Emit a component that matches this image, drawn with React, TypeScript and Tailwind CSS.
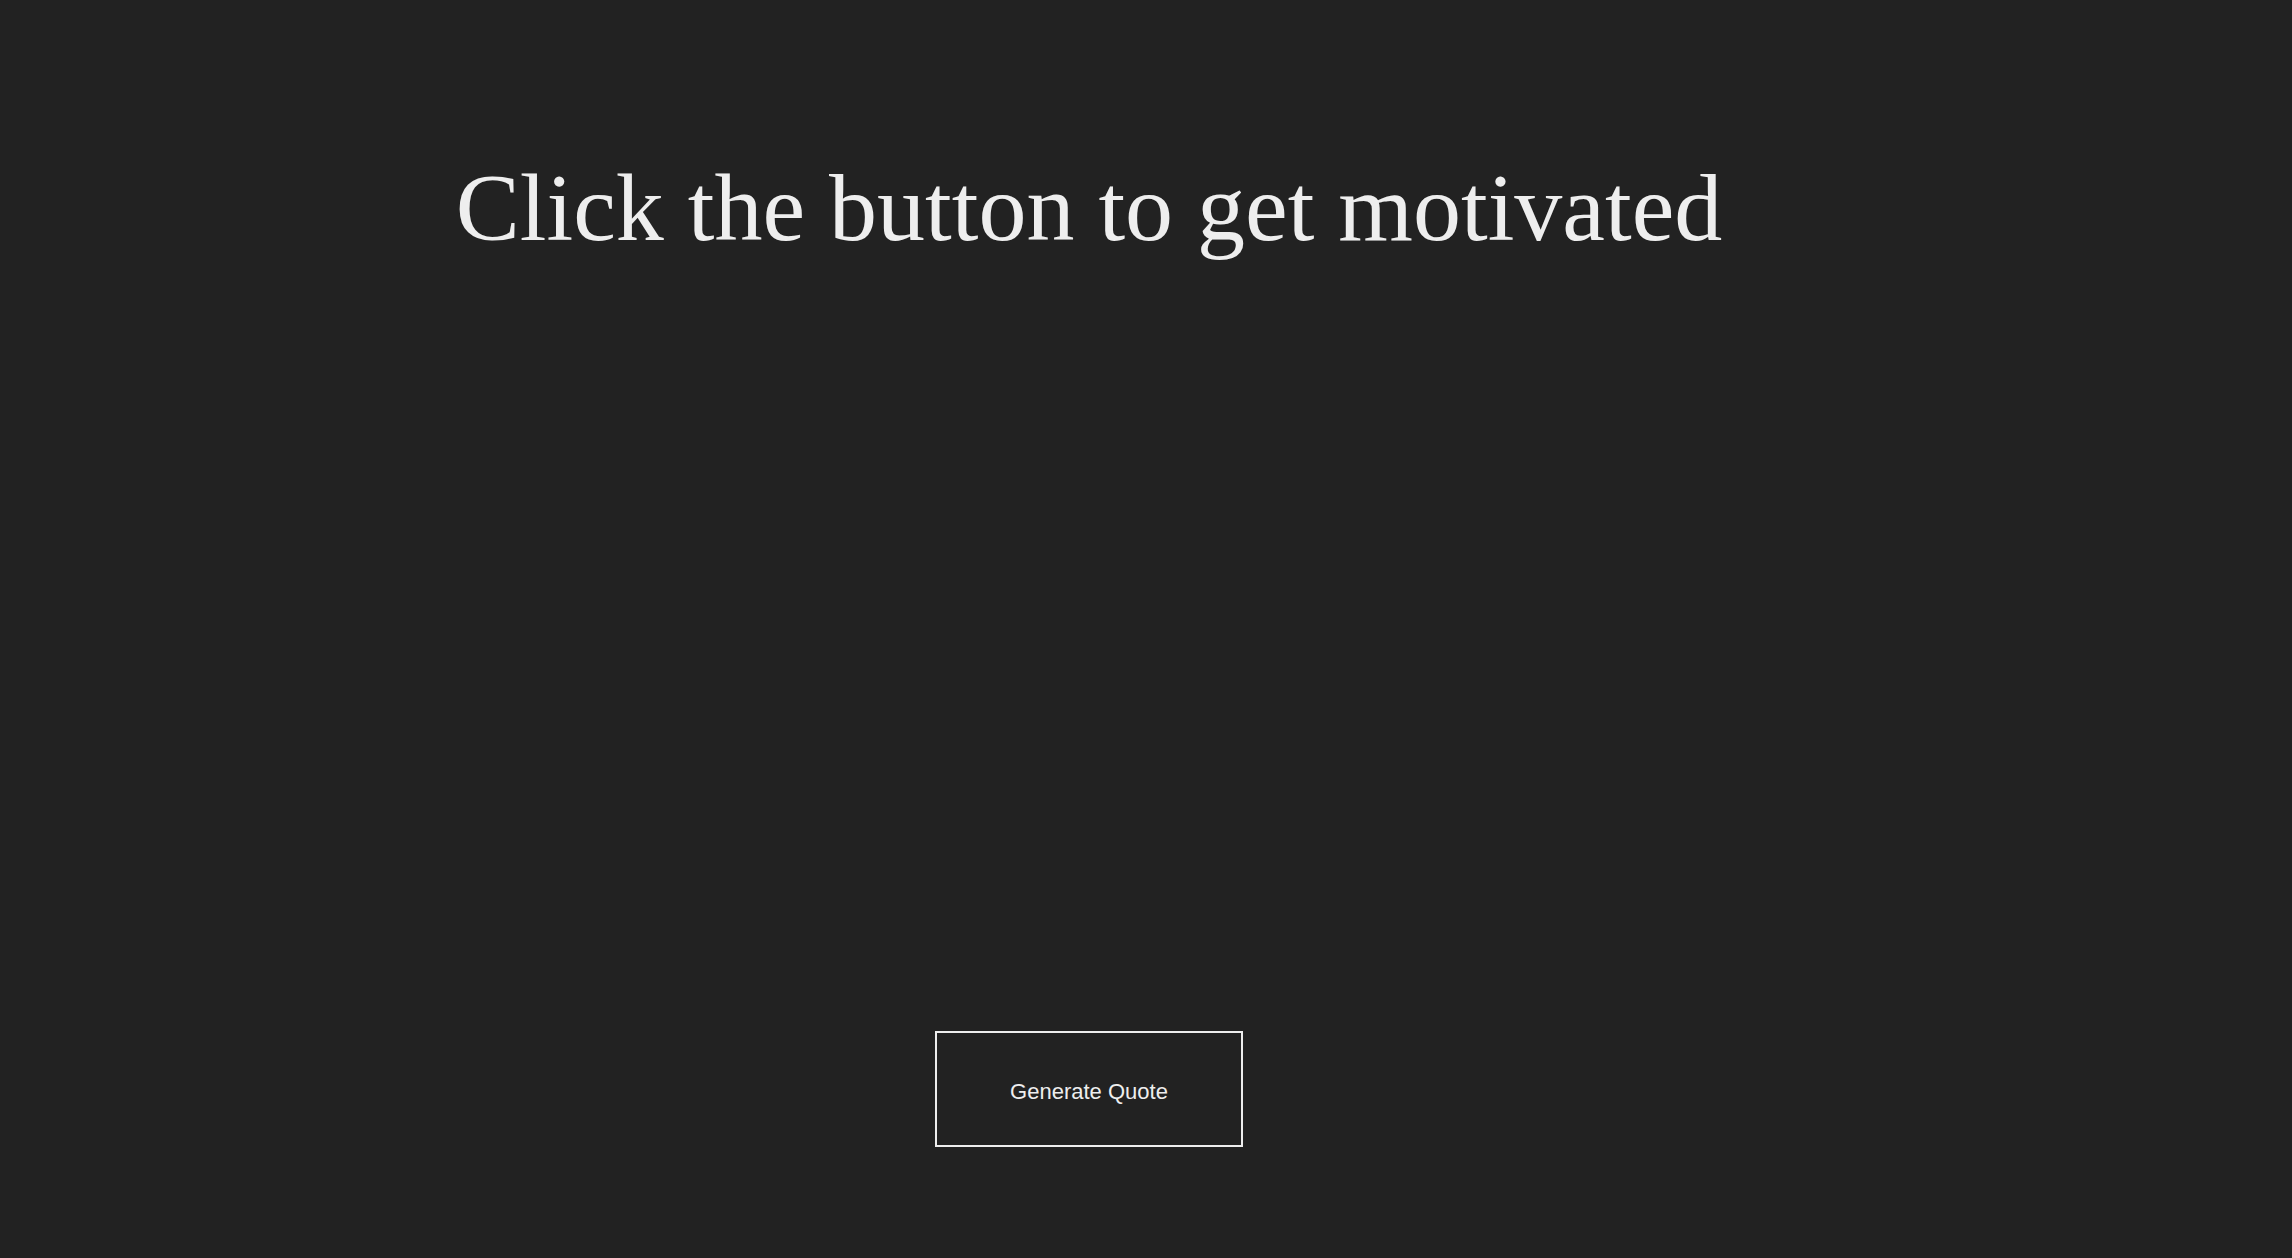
import React, { useState } from 'react';

const quotes = [
  'The secret of getting ahead is getting started.',
  'It always seems impossible until it is done.',
  'Do what you can, with what you have, where you are.',
];

export default function App() {
  const [quote, setQuote] = useState<string | null>(null);

  const nextQuote = () => {
    setQuote(quotes[Math.floor(Math.random() * quotes.length)]);
  };

  return (
    <div className="min-h-screen w-full bg-[#222222] text-[#eeeeee]">
      <div className="flex flex-col items-center pr-[114px] pt-[160px]">
        <h1 className="text-8xl leading-none font-normal font-['Liberation_Serif',serif] text-center">
          {quote ?? 'Click the button to get motivated'}
        </h1>
        <button
          onClick={nextQuote}
          className="mt-[775px] w-[308px] h-[116px] pt-[5px] border-2 border-[#eeeeee] bg-transparent text-[22px] font-['Liberation_Sans',Arial,sans-serif] text-[#eeeeee] cursor-pointer"
        >
          Generate Quote
        </button>
      </div>
    </div>
  );
}
